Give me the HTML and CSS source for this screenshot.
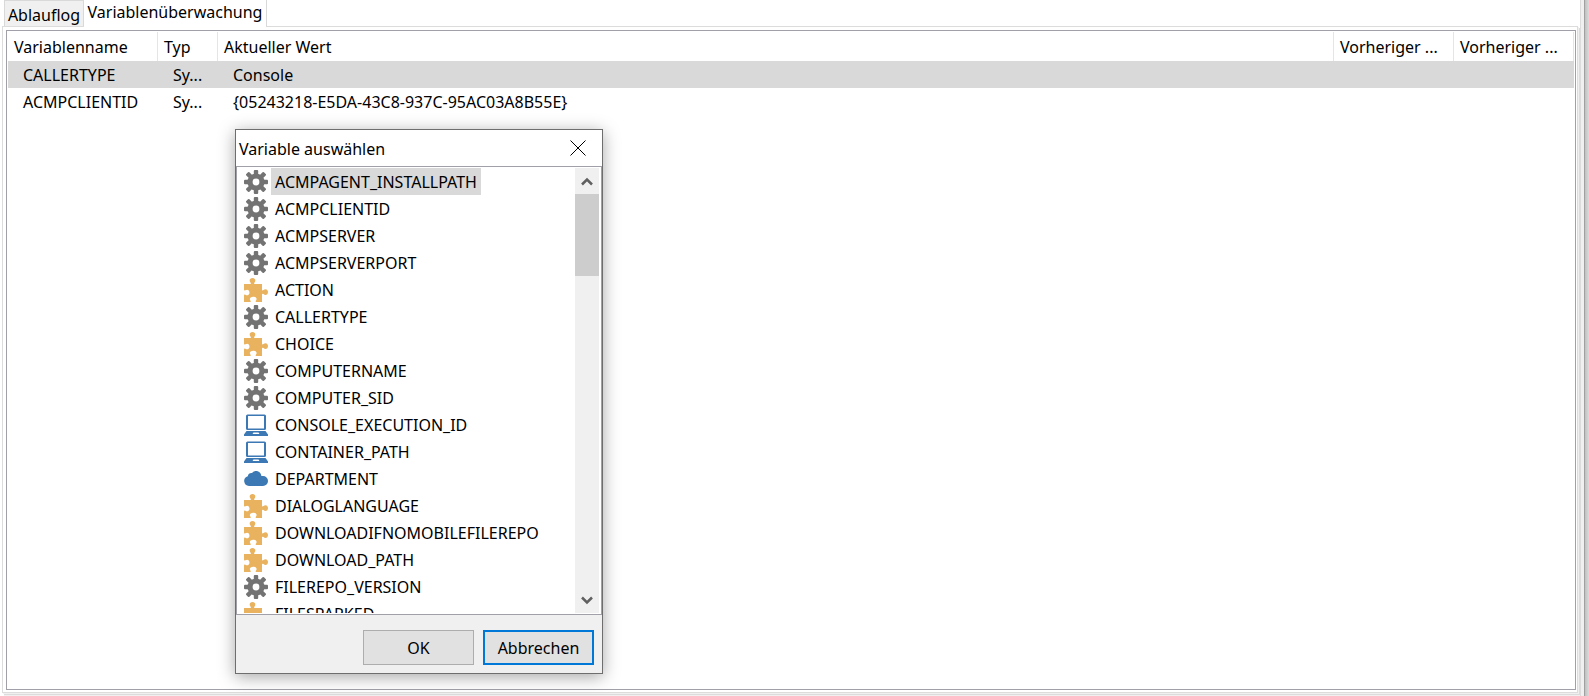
FILE: index.html
```html
<!DOCTYPE html>
<html lang="de">
<head>
    <meta charset="UTF-8">
    <meta name="viewport" content="width=device-width, initial-scale=1.0">
    <title>Variablenüberwachung</title>
    <link rel="stylesheet" href="styles.css">
</head>
<body>
    <svg class="sprite" aria-hidden="true">
        <symbol id="gear" viewBox="0 0 24 24">
            <g fill="#737373">
                <rect x="9.800" y="0" width="4.400" height="24" rx="1"/>
                <rect x="0" y="9.800" width="24" height="4.400" rx="1"/>
                <rect x="9.800" y="-.5" width="4.400" height="25" rx="1" transform="rotate(45 12 12)"/>
                <rect x="9.800" y="-.5" width="4.400" height="25" rx="1" transform="rotate(-45 12 12)"/>
                <circle cx="12" cy="12" r="8.600"/>
            </g>
            <circle cx="12" cy="12" r="3.400" fill="#fff"/>
        </symbol>
        <symbol id="puzzle" viewBox="0 0 24 24">
            <path fill="#e9b25e" d="M0 6h6.200c.8 0 .9-.6.4-1.300C4.600 2.500 6 0 8.500 0s3.900 2.500 1.900 4.700c-.5.7-.4 1.300.4 1.300H18v5.600c0 1 .7 1.300 1.500.5 1.800-1.900 4.500-.8 4.500 2s-2.700 3.900-4.500 2c-.8-.8-1.500-.5-1.500.5V24h-5.400c-1 0-1.200-.6-.6-1.400 1.500-1.800.1-3.900-2.800-3.900s-4.300 2.100-2.800 3.900c.6.800.4 1.400-.6 1.400H0v-6.600c0-.9.600-1.200 1.400-.6 1.900 1.300 4.100.2 4.100-2.300s-2.200-3.600-4.100-2.300c-.8.600-1.400.3-1.400-.6z"/>
        </symbol>
        <symbol id="laptop" viewBox="0 0 24 24">
            <path fill="#3c78b4" fill-rule="evenodd" d="M3.500 1.500h17A1.500 1.500 0 0 1 22 3v12.500a1.500 1.500 0 0 1-1.500 1.500h-17A1.500 1.500 0 0 1 2 15.500V3a1.500 1.500 0 0 1 1.500-1.500zM4 3v12.500h16V3zM2.500 18h19l2.500 3.500V23H0v-1.500zM9.500 19.500L8.500 21h7l-1-1.500z"/>
        </symbol>
        <symbol id="cloud" viewBox="0 0 24 24">
            <path fill="#3c78b4" d="M5 19a5 5 0 0 1-1.200-9.800c.4-2.300 2.200-3.500 4.200-3.100C9.300 4.200 11.200 3.600 13 4.100c2.600.6 4.100 2.600 4.400 4.900h1.600a5 5 0 0 1 0 10z"/>
        </symbol>
    </svg>

    <main class="window">
        <div class="tabs" role="tablist">
            <button class="tab" role="tab" aria-selected="false">Ablauflog</button>
            <button class="tab active" role="tab" aria-selected="true">Variablenüberwachung</button>
        </div>
        <div class="panel" role="tabpanel">
            <div class="grid">
                <table class="variables">
                    <colgroup>
                        <col class="col-name">
                        <col class="col-type">
                        <col>
                        <col class="col-previous">
                        <col class="col-previous">
                    </colgroup>
                    <thead>
                        <tr>
                            <th>Variablenname</th>
                            <th>Typ</th>
                            <th>Aktueller Wert</th>
                            <th>Vorheriger ...</th>
                            <th>Vorheriger ...</th>
                        </tr>
                    </thead>
                    <tbody>
                        <tr class="selected">
                            <td>CALLERTYPE</td>
                            <td>Sy...</td>
                            <td>Console</td>
                            <td></td>
                            <td></td>
                        </tr>
                        <tr>
                            <td>ACMPCLIENTID</td>
                            <td>Sy...</td>
                            <td>{05243218-E5DA-43C8-937C-95AC03A8B55E}</td>
                            <td></td>
                            <td></td>
                        </tr>
                    </tbody>
                </table>
            </div>
        </div>
    </main>

    <section class="dialog" role="dialog" aria-labelledby="dialog-title">
        <header class="titlebar">
            <h1 id="dialog-title">Variable auswählen</h1>
            <button class="close" aria-label="Schließen">
                <svg width="16" height="16" viewBox="0 0 16 16"><path d="M.5.5l15 15M15.500.5l-15 15" stroke="#000" fill="none"/></svg>
            </button>
        </header>
        <div class="picker">
            <ul class="list">
                <li class="selected"><svg><use href="#gear"/></svg><span>ACMPAGENT_INSTALLPATH</span></li>
                <li><svg><use href="#gear"/></svg><span>ACMPCLIENTID</span></li>
                <li><svg><use href="#gear"/></svg><span>ACMPSERVER</span></li>
                <li><svg><use href="#gear"/></svg><span>ACMPSERVERPORT</span></li>
                <li><svg><use href="#puzzle"/></svg><span>ACTION</span></li>
                <li><svg><use href="#gear"/></svg><span>CALLERTYPE</span></li>
                <li><svg><use href="#puzzle"/></svg><span>CHOICE</span></li>
                <li><svg><use href="#gear"/></svg><span>COMPUTERNAME</span></li>
                <li><svg><use href="#gear"/></svg><span>COMPUTER_SID</span></li>
                <li><svg><use href="#laptop"/></svg><span>CONSOLE_EXECUTION_ID</span></li>
                <li><svg><use href="#laptop"/></svg><span>CONTAINER_PATH</span></li>
                <li><svg><use href="#cloud"/></svg><span>DEPARTMENT</span></li>
                <li><svg><use href="#puzzle"/></svg><span>DIALOGLANGUAGE</span></li>
                <li><svg><use href="#puzzle"/></svg><span>DOWNLOADIFNOMOBILEFILEREPO</span></li>
                <li><svg><use href="#puzzle"/></svg><span>DOWNLOAD_PATH</span></li>
                <li><svg><use href="#gear"/></svg><span>FILEREPO_VERSION</span></li>
                <li><svg><use href="#puzzle"/></svg><span>FILESPARKED</span></li>
            </ul>
            <div class="scrollbar">
                <button class="arrow" aria-label="Nach oben">
                    <svg width="12" height="9" viewBox="0 0 12 9"><path d="M1 7.500L6 2.500l5 5" fill="none" stroke="#606060" stroke-width="2.500"/></svg>
                </button>
                <div class="thumb"></div>
                <button class="arrow down" aria-label="Nach unten">
                    <svg width="12" height="9" viewBox="0 0 12 9"><path d="M1 1.500l5 5 5-5" fill="none" stroke="#606060" stroke-width="2.500"/></svg>
                </button>
            </div>
        </div>
        <footer class="actions">
            <button class="btn">OK</button>
            <button class="btn default">Abbrechen</button>
        </footer>
    </section>
</body>
</html>
```
FILE: styles.css
```css
* {
    box-sizing: border-box;
}

body {
    margin: 0;
    height: 100vh;
    overflow: hidden;
    display: flex;
    background: linear-gradient(90deg, #c0c0c0, #dcdcdc) right / 4px 100% no-repeat #fff;
    font-family: "Noto Sans", "Open Sans", sans-serif;
    font-size: 16px;
    line-height: 20px;
    color: #000;
}

button {
    margin: 0;
    padding: 0;
    border: 0;
    background: none;
    font: inherit;
    color: inherit;
}

.sprite {
    position: absolute;
    width: 0;
    height: 0;
}

/* Main window */

.window {
    flex: 1;
    display: flex;
    flex-direction: column;
    margin-right: 4px;
    padding: 0 6px 3px 2px;
    border-right: 1px solid #a0a0a0;
    background: #fff;
    box-shadow: inset -3px 0 #f0f0f0, inset -4px 0 #dcdcdc;
}

.tabs {
    display: flex;
    height: 26px;
    padding-left: 2px;
}

.tab {
    width: 80px;
    padding-top: 2px;
    border: 1px solid #d9d9d9;
    border-bottom: 0;
    background: #f0f0f0;
}

.tab.active {
    width: 183px;
    height: 27px;
    padding: 0 0 3px;
    border-width: 0 1px 0 0;
    background: #fff;
    z-index: 1;
}

.panel {
    flex: 1;
    display: flex;
    padding: 3px 1px 2px 3px;
    border: 1px solid #dcdcdc;
    box-shadow: 1px 1px #f0f0f0, 2px 2px #dcdcdc, 2px 3px #f0f0f0;
}

.grid {
    flex: 1;
    padding: 1px;
    border: 1px solid #a0a0a8;
}

.variables {
    width: 100%;
    table-layout: fixed;
    border-collapse: separate;
    border-spacing: 0;
}

.col-name {
    width: 150px;
}

.col-type {
    width: 60px;
}

.col-previous {
    width: 120px;
}

.variables th {
    height: 29px;
    padding: 0 6px;
    border-right: 1px solid #e5e5e5;
    font-weight: normal;
    text-align: left;
    white-space: nowrap;
}

.variables td {
    height: 27px;
    padding: 0 0 0 15px;
    white-space: nowrap;
}

.selected {
    background: #d9d9d9;
}

/* Variable picker */

.dialog {
    position: absolute;
    left: 235px;
    top: 129px;
    width: 368px;
    border: 1px solid #6e6e6e;
    background: #f0f0f0;
    box-shadow: 0 3px 16px rgba(0, 0, 0, 0.35);
}

.titlebar {
    display: flex;
    align-items: center;
    justify-content: space-between;
    height: 36px;
    padding: 0 16px 0 3px;
    background: #fff;
}

.titlebar h1 {
    margin: 0;
    padding-top: 2px;
    font-size: 16px;
    font-weight: normal;
}

.close svg {
    display: block;
}

.picker {
    display: flex;
    height: 449px;
    padding: 1px 2px 1px 1px;
    border: 1px solid #a0a0a8;
    background: #fff;
}

.list {
    flex: 1;
    margin: 0;
    padding: 0 0 0 6px;
    overflow: hidden;
    list-style: none;
}

.list li {
    display: flex;
    align-items: center;
    gap: 3px;
    height: 27px;
    background: none;
}

.list svg {
    width: 24px;
    height: 24px;
}

.list span {
    padding: 2px 4px 0;
    line-height: 25px;
}

.list .selected span {
    background: #d9d9d9;
}

.scrollbar {
    display: flex;
    flex-direction: column;
    width: 24px;
    background: #f0f0f0;
}

.arrow {
    display: flex;
    align-items: center;
    justify-content: center;
    height: 26px;
}

.arrow.down {
    margin-top: auto;
}

.thumb {
    height: 82px;
    background: #cdcdcd;
}

.actions {
    display: flex;
    justify-content: flex-end;
    gap: 9px;
    padding: 15px 8px 8px;
}

.btn {
    width: 111px;
    height: 35px;
    border: 1px solid #adadad;
    background: #e1e1e1;
}

.btn.default {
    border: 2px solid #0078d7;
}
```
